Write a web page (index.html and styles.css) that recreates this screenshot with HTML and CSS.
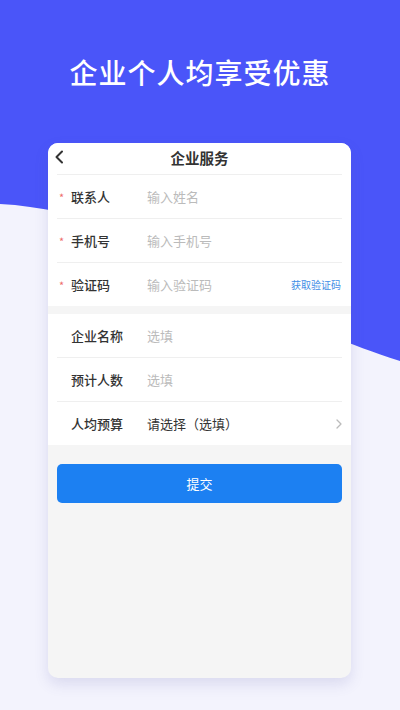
FILE: index.html
```html
<!DOCTYPE html>
<html lang="zh">
<head>
<meta charset="utf-8">
<link rel="stylesheet" href="styles.css">
</head>
<body>
<div class="page">
  <svg class="wave" width="400" height="400" viewBox="0 0 400 400" preserveAspectRatio="none">
    <path d="M0 0 H400 V361 C372 352 352 344 330 336 C260 310 150 240 60 212 C40 208 20 205 0 204 Z" fill="#4a55f9"/>
  </svg>
  <h1 class="headline">企业个人均享受优惠</h1>
  <div class="card">
    <div class="head-wrap">
      <div class="card-head">
        <svg class="back" width="10" height="14" viewBox="0 0 10 14"><path d="M8 1.5 L2.5 7 L8 12.5" fill="none" stroke="#333" stroke-width="2" stroke-linecap="round" stroke-linejoin="round"/></svg>
        <span class="card-title">企业服务</span>
      </div>
    </div>
    <div class="section">
      <div class="row"><span class="star">*</span><span class="label">联系人</span><span class="ph">输入姓名</span></div>
      <div class="row"><span class="star">*</span><span class="label">手机号</span><span class="ph">输入手机号</span></div>
      <div class="row last"><span class="star">*</span><span class="label">验证码</span><span class="ph">输入验证码</span><span class="code">获取验证码</span></div>
    </div>
    <div class="section second">
      <div class="row"><span class="star"></span><span class="label">企业名称</span><span class="ph">选填</span></div>
      <div class="row"><span class="star"></span><span class="label">预计人数</span><span class="ph">选填</span></div>
      <div class="row last"><span class="star"></span><span class="label">人均预算</span><span class="val">请选择（选填）</span>
        <svg class="chev" width="6" height="10" viewBox="0 0 6 10"><path d="M1 1 L5 5 L1 9" fill="none" stroke="#bbb" stroke-width="1.3" stroke-linecap="round" stroke-linejoin="round"/></svg>
      </div>
    </div>
    <div class="btn">提交</div>
  </div>
</div>
</body>
</html>
```
FILE: styles.css
```css
html, body {
  margin: 0;
  padding: 0;
}
body {
  font-family: "Noto Sans CJK SC", "Noto Sans", sans-serif;
  background: #f3f3fd;
}
.page {
  position: relative;
  width: 400px;
  height: 710px;
  overflow: hidden;
  background: #f3f3fd;
  display: flex;
  flex-direction: column;
}
.wave {
  position: absolute;
  left: 0;
  top: 0;
}
.headline {
  position: relative;
  margin: 52px 0 0;
  height: 40px;
  line-height: 40px;
  text-align: center;
  color: #fff;
  font-size: 28px;
  font-weight: 500;
  letter-spacing: 1px;
}
.card {
  position: relative;
  margin: 51px 49px 0 48px;
  height: 535px;
  background: #f5f5f5;
  border-radius: 10px;
  overflow: hidden;
  box-shadow: 0 6px 14px rgba(90, 90, 170, 0.16);
}
.head-wrap {
  background: #fff;
}
.card-head {
  position: relative;
  margin: 0 9px;
  height: 28px;
  padding-bottom: 3px;
  display: flex;
  align-items: center;
  justify-content: center;
  border-bottom: 1px solid #efefef;
}
.back {
  position: absolute;
  left: -3px;
  top: 7px;
}
.card-title {
  font-size: 14.5px;
  font-weight: 700;
  color: #333;
}
.section {
  background: #fff;
}
.section.second {
  margin-top: 8px;
}
.row {
  margin: 0 9px;
  height: 43px;
  display: flex;
  align-items: center;
  border-bottom: 1px solid #efefef;
  font-size: 13px;
}
.row.last {
  border-bottom: none;
}
.star {
  width: 12px;
  padding-left: 2px;
  color: #ee6b6b;
  font-size: 11px;
  line-height: 1;
  padding-top: 2px;
}
.label {
  width: 76px;
  color: #333;
  font-weight: 500;
}
.ph {
  color: #bbb;
  flex: 1;
}
.val {
  color: #333;
  flex: 1;
}
.code {
  color: #3f8ee6;
  font-size: 10px;
  margin-right: 1px;
}
.btn {
  margin: 19px 9px 0;
  height: 39px;
  border-radius: 5px;
  background: #1c80f2;
  color: #fff;
  font-size: 13px;
  display: flex;
  align-items: center;
  justify-content: center;
}
```
